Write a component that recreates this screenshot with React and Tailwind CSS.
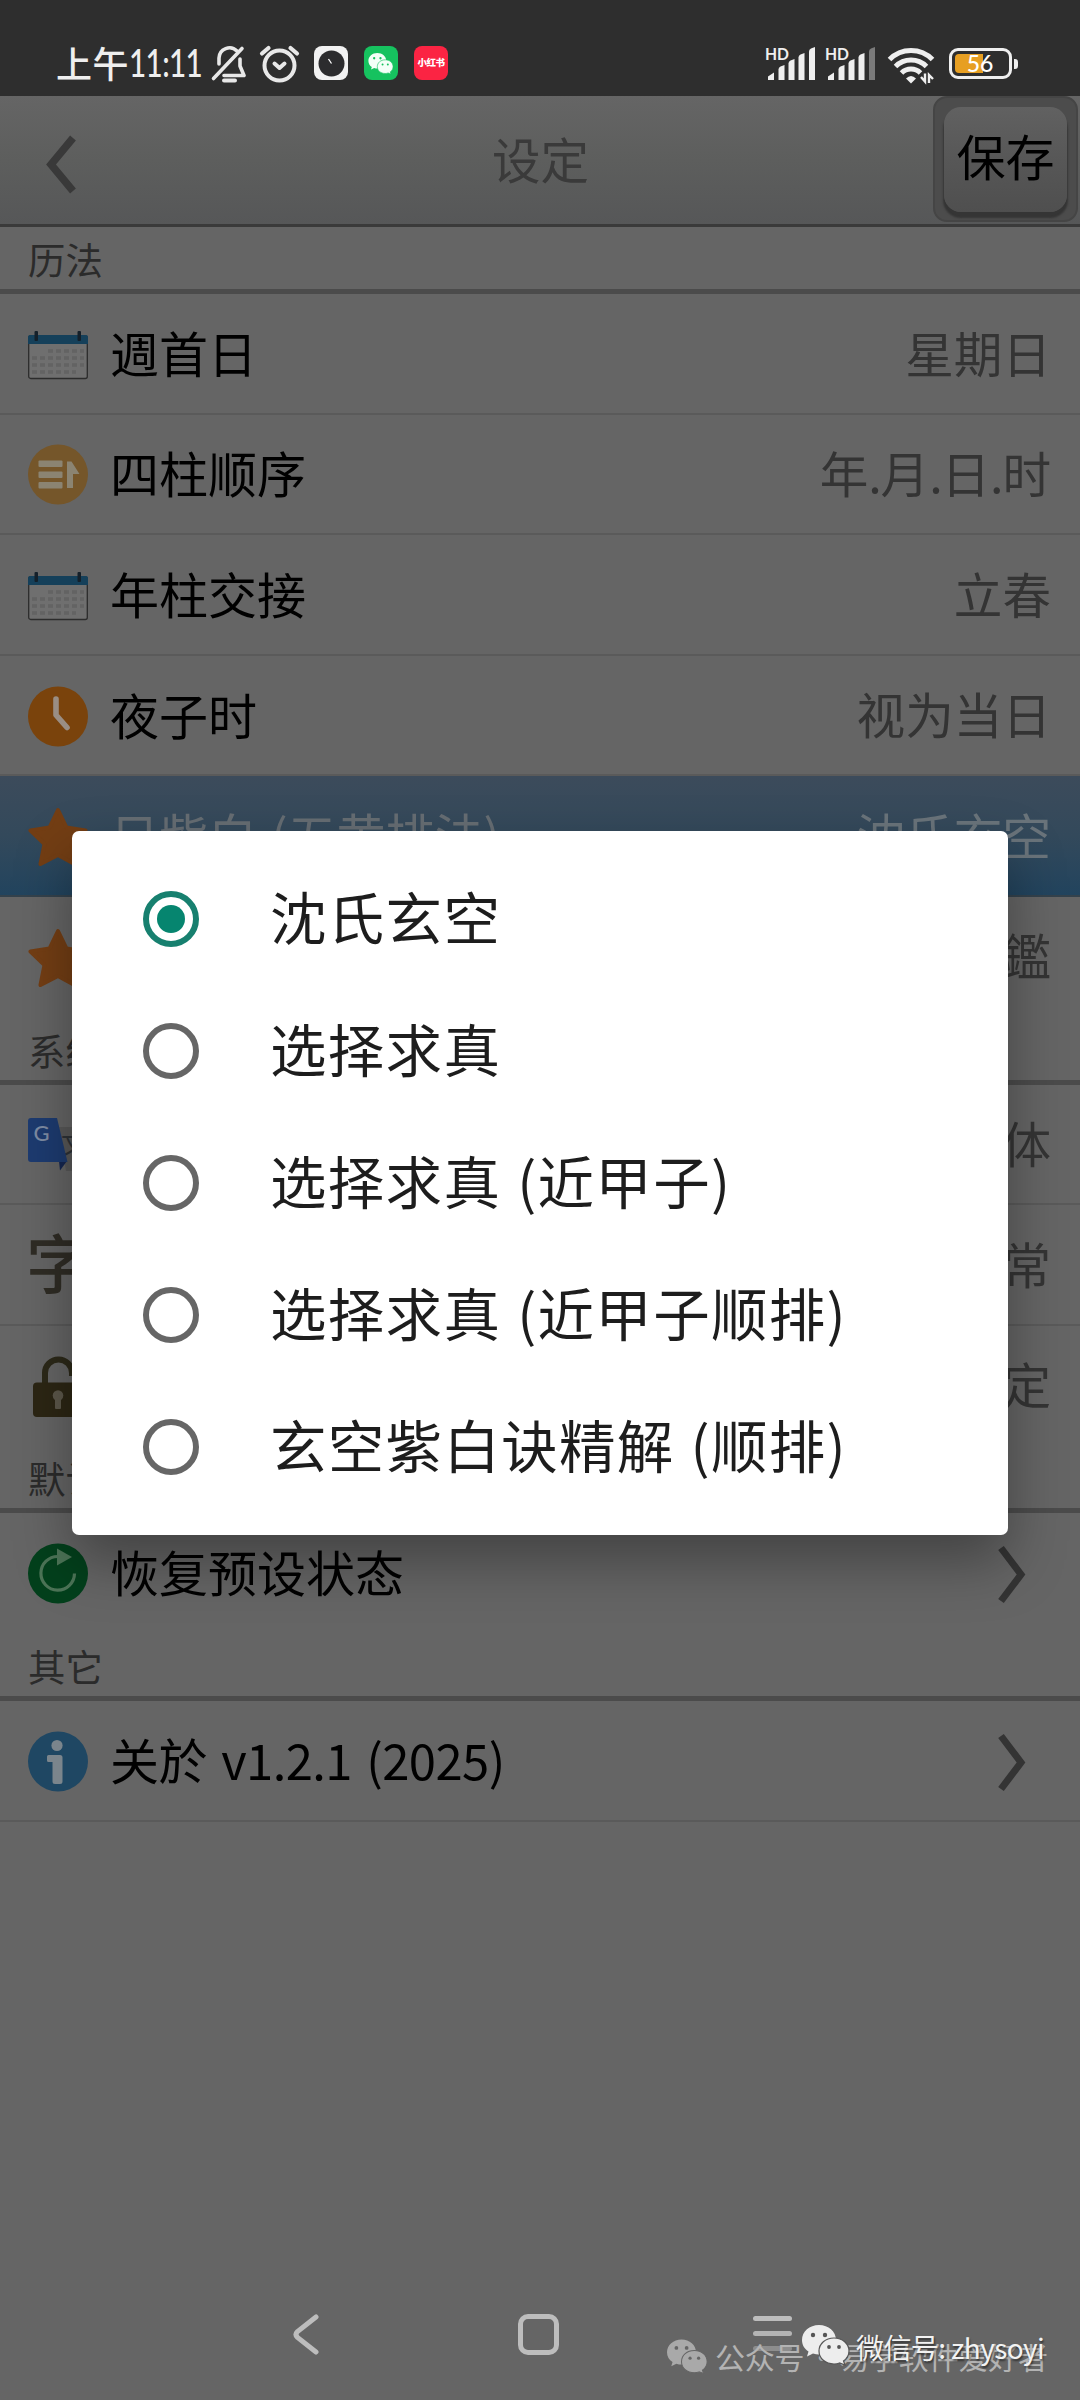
import React, { useState } from 'react';

const CalendarIcon = () => (
  <svg className="w-[60px] h-[61px] mt-[2px]" viewBox="0 0 60 61">
    <rect x="0.7" y="12" width="58.6" height="42.5" rx="2" fill="#6f6f6f" stroke="#2c2c2c" strokeWidth="1.3" />
    <path d="M0 20V13a2 2 0 0 1 2-2h56a2 2 0 0 1 2 2v7z" fill="#15405a" />
    <rect x="6.5" y="7" width="3.5" height="10" rx="1" fill="#14202a" />
    <rect x="49.5" y="7" width="3.5" height="10" rx="1" fill="#14202a" />
    <path d="M20 27H56M4 34H56M4 41H56M4 48H48" stroke="#636363" strokeWidth="3.6" strokeDasharray="5 3" />
  </svg>
);

const OrderIcon = () => (
  <svg className="w-[60px] h-[61px] mt-[2px]" viewBox="0 0 60 61">
    <circle cx="30" cy="30.5" r="30" fill="#75562a" />
    <g fill="#8b8472">
      <rect x="10.5" y="16.5" width="24" height="6.5" rx="1" />
      <rect x="10.5" y="27.5" width="24" height="6.5" rx="1" />
      <rect x="10.5" y="38" width="24" height="6.5" rx="1" />
      <path d="M39 17.5h4.5L51.5 30H45v14h-6z" />
    </g>
  </svg>
);

const ClockIcon = () => (
  <svg className="w-[60px] h-[61px] mt-[2px]" viewBox="0 0 60 61">
    <circle cx="30" cy="30.5" r="30" fill="#7a430c" />
    <path d="M28 13V29L39 41.5" fill="none" stroke="#9a8e84" strokeWidth="5.6" strokeLinecap="round" strokeLinejoin="round" />
  </svg>
);

const StarIcon = () => (
  <svg className="w-[60px] h-[61px] mt-[4px]" viewBox="0 0 60 61">
    <path
      d="M30 3L38.5 20.5L57.5 23.5L43.5 37L46.5 57L30 48L12.5 57L16.5 37L2.5 23.5L21.5 20.5Z"
      fill="#733e14"
      stroke="#733e14"
      strokeWidth="4"
      strokeLinejoin="round"
    />
  </svg>
);

const TranslateIcon = () => (
  <svg className="w-[60px] h-[61px] mt-[2px]" viewBox="0 0 60 61">
    <path d="M31 13H57a3 3 0 0 1 3 3V54a3 3 0 0 1-3 3H38z" fill="#585858" />
    <text x="33" y="40" fontSize="26" fill="#2e3236" fontFamily="Noto Sans CJK SC, sans-serif">文</text>
    <path d="M31 47H39L32 56.5z" fill="#152650" />
    <path d="M3 4H29L39.5 48H3a3 3 0 0 1-3-3V7a3 3 0 0 1 3-3z" fill="#1d3b70" />
    <text x="5.5" y="27" fontSize="22" fontWeight="500" fill="#7d8ba3" fontFamily="Lato, sans-serif">G</text>
  </svg>
);

const FontIcon = () => (
  <svg className="w-[62px] h-[66px] mr-[-2px] overflow-visible" viewBox="0 0 62 66">
    <text x="-2" y="57" fontSize="64" fontWeight="500" fill="#2f2c25" fontFamily="Noto Sans CJK SC, sans-serif">字</text>
  </svg>
);

const LockIcon = () => (
  <svg className="w-[60px] h-[61px] mt-[2px]" viewBox="0 0 60 61">
    <path d="M17 28V17a13.5 13.5 0 0 1 27 0V20" fill="none" stroke="#2c2919" strokeWidth="6" />
    <rect x="5" y="26.5" width="52" height="34.5" rx="4" fill="#2c2614" />
    <circle cx="30" cy="39.5" r="5.3" fill="#5c574a" />
    <rect x="27" y="40" width="6" height="13" rx="1" fill="#5c574a" />
  </svg>
);

const RestoreIcon = () => (
  <svg className="w-[60px] h-[61px] mt-[2px]" viewBox="0 0 60 61">
    <circle cx="30" cy="30.5" r="30" fill="#03401c" />
    <path d="M46.5 30.5A16.8 16.8 0 1 1 30 13.5" fill="none" stroke="#4c7457" strokeWidth="3.2" />
    <path d="M29 5.5L44 14L29 22.5z" fill="#4c7457" />
  </svg>
);

const InfoIcon = () => (
  <svg className="w-[60px] h-[61px] mt-[2px]" viewBox="0 0 60 61">
    <circle cx="30" cy="30.5" r="30" fill="#1f4763" />
    <circle cx="29" cy="14.5" r="5.6" fill="#7b858c" />
    <path d="M20.5 24H32a2.5 2.5 0 0 1 2.5 2.5V50.5a2.5 2.5 0 0 1-2.5 2.5H27a2.5 2.5 0 0 1-2.5-2.5V31H20.5a1.5 1.5 0 0 1-1.5-1.5V25.5a1.5 1.5 0 0 1 1.5-1.5z" fill="#7b858c" />
  </svg>
);

const WeChatGlyph = ({ className, fill, eye }) => (
  <svg className={className} viewBox="0 0 48 40">
    <path d="M17 0C7.5 0 0 6.5 0 15C0 20 2.5 24 6.5 26.5L5 31.5L11 28.5C13 29.2 15 29.5 17 29.5C26.5 29.5 34 23 34 15C34 6.5 26.5 0 17 0z" fill={fill} />
    <path d="M32 13C23.5 13 17 18.5 17 26C17 33.5 23.5 39 32 39C34 39 36 38.7 37.5 38L43 40L41.5 36C45 33.5 47 30 47 26C47 18.5 40.5 13 32 13z" fill={fill} stroke={eye} strokeWidth="1.2" />
    <circle cx="11" cy="10" r="2.2" fill={eye} />
    <circle cx="23" cy="10" r="2.2" fill={eye} />
    <circle cx="27" cy="22" r="1.9" fill={eye} />
    <circle cx="37" cy="22" r="1.9" fill={eye} />
  </svg>
);

const SignalIcon = ({ weak }) => (
  <svg className="w-[52px] h-[40px] -mt-[4px] overflow-visible" viewBox="0 -4 52 40" fill="#efefef">
    <text x="0" y="14.5" fontSize="17" fontWeight="700" textLength="24" lengthAdjust="spacingAndGlyphs" fontFamily="Lato, sans-serif">HD</text>
    <path d="M3 35V31.5L9 27.5V35z" />
    <path d="M13.5 35V24.5q0-2 2-3L19.5 20V35z" />
    <path d="M23.5 35V18.5q0-2 2-3L29.5 14V35z" />
    <path d="M33.5 35V12.5q0-2 2-3L39.5 8V35z" />
    <path d="M44 35V6.5q0-2 2-3L50 2V35z" fill={weak ? '#7b7b7b' : '#efefef'} />
  </svg>
);

const Chevron = () => (
  <svg className="w-[30px] h-[60px] mr-[24px] mt-[3px]" viewBox="0 0 30 60">
    <path d="M4 4L24 30.5L4 57" fill="none" stroke="#343434" strokeWidth="7" />
  </svg>
);

const StatusBar = () => (
  <div className="h-24 bg-[#2e2e2e] flex justify-between pt-[44px] pl-[56px] pr-[62px] shrink-0">
    <div className="flex items-start">
      <div className="w-[154px] h-[36px] flex items-center text-[#efefef] font-medium whitespace-nowrap">
        <span className="text-[36px] tracking-[0.5px]">上午</span>
        <span className="text-[38px] tracking-[-0.8px] font-['Lato',sans-serif] scale-x-[0.78] origin-left">11:11</span>
      </div>
      <svg className="w-[38px] h-[40px]" viewBox="0 0 38 40" fill="none" stroke="#e8e8e8" strokeWidth="3.6" strokeLinecap="round" strokeLinejoin="round">
        <path d="M9 20V14A10.5 10.5 0 0 1 27 7M30 15V22L34 31.5H14" />
        <path d="M3.5 34.5L32 4.5" />
        <path d="M14 36.5H25" strokeWidth="4" />
      </svg>
      <svg className="ml-[11px] w-[42px] h-[40px]" viewBox="0 0 42 40" fill="none" stroke="#e8e8e8" strokeWidth="4" strokeLinecap="round" strokeLinejoin="round">
        <circle cx="20.5" cy="21.5" r="15" />
        <path d="M15.5 19.5L20.5 24L25.5 19.5" />
        <path d="M3 9.5L9.5 4M38 9.5L31.5 4" strokeWidth="4.2" />
      </svg>
      <div className="ml-[13px] mt-[2px] w-[34px] h-[34px] rounded-[8px] bg-[#f2f2f2] flex items-center justify-center">
        <svg className="w-[27px] h-[27px]" viewBox="0 0 27 27">
          <circle cx="13.5" cy="13.5" r="13" fill="#2c2c2e" />
          <path d="M10.5 9L13.5 13.5" stroke="#fff" strokeWidth="1.3" />
        </svg>
      </div>
      <div className="ml-[16px] mt-[2px] w-[34px] h-[34px] rounded-[8px] bg-[#16c25f] flex items-center justify-center">
        <WeChatGlyph className="w-[26px] h-[21px]" fill="#f4fff8" eye="#16c25f" />
      </div>
      <div className="ml-[16px] mt-[2px] w-[34px] h-[34px] rounded-[8px] bg-[#fb2443] flex items-center justify-center">
        <span className="text-white font-black text-[9.5px] leading-none tracking-[-0.5px] whitespace-nowrap">小红书</span>
      </div>
    </div>
    <div className="flex items-start pt-[1px]">
      <SignalIcon />
      <div className="ml-[8px]">
        <SignalIcon weak />
      </div>
      <svg className="ml-[10px] w-[48px] h-[40px]" viewBox="0 0 48 40">
        <g fill="none" stroke="#efefef" strokeWidth="5">
          <path d="M2.5 14.5A30 30 0 0 1 45.5 14.5" />
          <path d="M8.5 21.5A22 22 0 0 1 39.5 21.5" />
          <path d="M14.5 28A13.5 13.5 0 0 1 33.5 28" />
        </g>
        <path d="M19 33.5Q24 28.5 29 33.5L24 38.5z" fill="#efefef" />
        <path d="M34 32L38 36.5V28.5M42 38V30L46 34" fill="none" stroke="#efefef" strokeWidth="2.4" />
      </svg>
      <div className="ml-[14px] mt-[3px] w-[63px] h-[31px] border-[3px] border-[#efefef] rounded-[9px] p-[3px] relative">
        <div className="w-[28px] h-full bg-[#e79f22] rounded-l-[4px]" />
        <div className="absolute inset-0 flex items-center justify-center text-white text-[23px] leading-none font-medium font-['Lato',sans-serif] pr-[1px]">56</div>
      </div>
      <div className="ml-[2px] mt-[14px] w-[4px] h-[10px] rounded-r-[3px] bg-[#efefef]" />
    </div>
  </div>
);

const Header = () => (
  <div className="h-[131px] shrink-0 border-b-[3px] border-[#3a3a3a] bg-gradient-to-b from-[#656565] via-[#5d5e5d] to-[#565758] grid grid-cols-3 items-start">
    <svg className="ml-[44px] mt-[38px] w-[36px] h-[60px]" viewBox="0 0 36 60">
      <path d="M29 4L7 30.5L29 57" fill="none" stroke="#393939" strokeWidth="7.5" />
    </svg>
    <h1 className="text-center text-[48.5px] leading-[60px] mt-[32px] pl-[1px] text-[#3a3a3a]">设定</h1>
    <button className="justify-self-end mr-[2px] w-[145px] h-[126px] rounded-[14px] bg-[#4c4c4c] border-2 border-[#454545] flex justify-center pt-[9px]">
      <span className="w-[123px] h-[105px] rounded-[17px] bg-gradient-to-b from-[#616161] via-[#575757] to-[#4f4f4f] shadow-[0_5px_2px_1px_#353535] text-black text-[49px] leading-[96px] whitespace-nowrap text-center">
        保存
      </span>
    </button>
  </div>
);

const SectionTitle = ({ children, className }) => (
  <div className={`${className} shrink-0 border-b-[5px] border-[#4b4b4b] pl-[28px] text-[37.4px] text-[#2b2b2b] flex items-end`}>
    <span className="leading-[52px] pb-[4px]">{children}</span>
  </div>
);

const SettingRow = ({ icon, label, value, arrow, last, selected, labelClass }) => (
  <div
    className={`h-[120.6px] shrink-0 flex items-center pl-[28px] pr-[29px] border-b-2 ${
      selected
        ? 'bg-gradient-to-b from-[#3c4b5b] via-[#33495b] to-[#22445e] border-[#34424c]'
        : last
          ? 'border-transparent'
          : 'border-[#5a5a5a]'
    }`}
  >
    {icon}
    <span className={`ml-[22px] pb-[4px] text-[49px] leading-none whitespace-pre ${labelClass || ''} ${selected ? 'text-[#666d73]' : 'text-black'}`}>
      {label}
    </span>
    <span className={`ml-auto pb-[3px] text-[48.6px] leading-none ${selected ? 'text-[#6a747b]' : 'text-[#343434]'}`}>
      {value &&
        value.split('.').map((part, i) => (
          <React.Fragment key={part}>
            {i > 0 && <span className="tracking-[-1.2px]">.</span>}
            {part}
          </React.Fragment>
        ))}
    </span>
    {arrow && <Chevron />}
  </div>
);

const OPTIONS = ['沈氏玄空', '选择求真', '选择求真 (近甲子)', '选择求真 (近甲子顺排)', '玄空紫白诀精解 (顺排)'];

const OptionDialog = () => {
  const [selected, setSelected] = useState(0);

  return (
    <div className="absolute left-[72px] top-[831px] w-[936px] h-[704px] rounded-[7px] bg-white py-[22px] shadow-[0_26px_56px_rgba(0,0,0,0.34)]">
      {OPTIONS.map((option, index) => (
        <div key={option} className="h-[132px] flex items-center pl-[71px]" onClick={() => setSelected(index)}>
          <span
            className={`w-[56px] h-[56px] rounded-full border-[6px] flex items-center justify-center ${
              selected === index ? 'border-[#17806f]' : 'border-[#666666]'
            }`}
          >
            {selected === index && <span className="w-[28px] h-[28px] rounded-full bg-[#06856f]" />}
          </span>
          <span className="ml-[71px] pb-[8px] text-[56.5px] leading-none tracking-[1.3px] [word-spacing:2px] text-[#1d1d1d] whitespace-nowrap">{option}</span>
        </div>
      ))}
    </div>
  );
};

const NavBar = () => (
  <div className="mt-auto h-[132px] shrink-0 flex items-start pt-[44px] pl-[291px]">
    <svg className="w-[30px] h-[46px]" viewBox="0 0 30 46">
      <path d="M25 5L6.5 19.5Q3.5 22.5 6.5 25.5L25 40" fill="none" stroke="#bdbdbd" strokeWidth="5" strokeLinecap="round" />
    </svg>
    <div className="ml-[197px] mt-[2px] w-[41px] h-[41px] rounded-[10px] border-[5px] border-[#bdbdbd]" />
    <div className="ml-[194px] mt-[4px] flex flex-col gap-[10px]">
      <div className="w-[39px] h-[5px] rounded-full bg-[#bdbdbd]" />
      <div className="w-[39px] h-[5px] rounded-full bg-[#b4b4b4]" />
      <div className="w-[39px] h-[5px] rounded-full bg-[#8d8d8d]" />
    </div>
  </div>
);

const App = () => (
  <div className="relative w-[1080px] h-[2400px] overflow-hidden bg-[#656565] flex flex-col font-['Noto_Sans_CJK_SC',sans-serif]">
    <StatusBar />
    <Header />

    <SectionTitle className="h-[67px]">历法</SectionTitle>
    <SettingRow icon={<CalendarIcon />} label="週首日" value="星期日" />
    <SettingRow icon={<OrderIcon />} label="四柱顺序" value="年.月.日.时" />
    <SettingRow icon={<CalendarIcon />} label="年柱交接" value="立春" />
    <SettingRow icon={<ClockIcon />} label="夜子时" value="视为当日" />
    <SettingRow icon={<StarIcon />} label="日紫白 (五黄排法)" labelClass="[word-spacing:3px]" value="沈氏玄空" selected />
    <SettingRow icon={<StarIcon />} value="鑑" last />

    <SectionTitle className="h-[67px]">系统</SectionTitle>
    <SettingRow icon={<TranslateIcon />} value="体" />
    <SettingRow icon={<FontIcon />} value="常" />
    <SettingRow icon={<LockIcon />} value="定" last />

    <SectionTitle className="h-[67px]">默认</SectionTitle>
    <SettingRow icon={<RestoreIcon />} label="恢复预设状态" arrow last />

    <SectionTitle className="h-[67px]">其它</SectionTitle>
    <SettingRow icon={<InfoIcon />} label="关於 v1.2.1 (2025)" labelClass="tracking-[-0.6px] [word-spacing:4px]" arrow />

    <NavBar />
    <OptionDialog />

    {/* account marks over the navigation bar */}
    <div className="absolute left-[667px] top-[2333px] flex items-center text-[#b3b3b3]">
      <WeChatGlyph className="w-[41px] h-[41px]" fill="#a9a9a9" eye="#656565" />
      <span className="ml-[7px] text-[30px] leading-[46px] tracking-[-0.2px] [word-spacing:-4px] whitespace-nowrap">公众号 · 易学软件爱好者</span>
    </div>
    <div className="absolute left-[802px] top-[2324px] flex items-start text-[#f2f2f2]">
      <WeChatGlyph className="w-[48px] h-[42px]" fill="#ededed" eye="#555555" />
      <span className="ml-[6px] text-[28px] leading-[46px] tracking-[-0.6px] whitespace-nowrap [text-shadow:1px_2px_2px_rgba(0,0,0,0.5)]">微信号: zhysoyi</span>
    </div>
  </div>
);

export default App;
